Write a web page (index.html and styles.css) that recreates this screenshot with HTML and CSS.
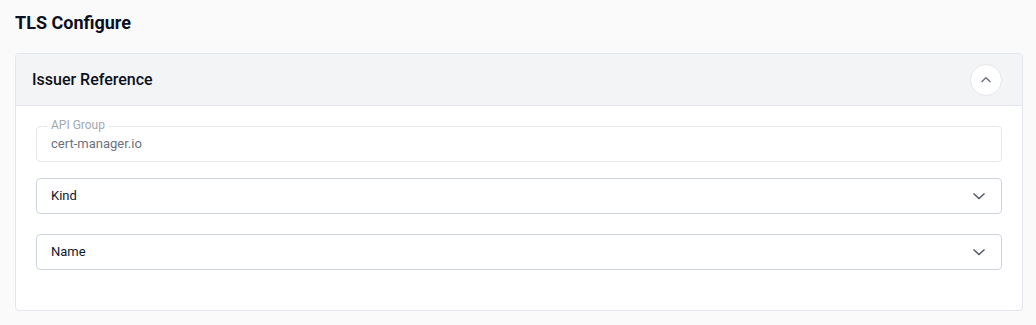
FILE: index.html
```html
<!DOCTYPE html>
<html lang="en">
<head>
    <meta charset="UTF-8">
    <meta name="viewport" content="width=device-width, initial-scale=1.0">
    <title>TLS Configure</title>
    <link rel="stylesheet" href="styles.css">
</head>
<body>
    <div class="page">
        <h1 class="page-title">TLS Configure</h1>

        <section class="card">
            <div class="card-header">
                <h2>Issuer Reference</h2>
                <button type="button" class="collapse-btn">
                    <svg width="12" height="12" viewBox="0 0 12 12"><path d="M1.5 8 L6 3.8 L10.5 8" fill="none" stroke="#6b7280" stroke-width="1.4"/></svg>
                </button>
            </div>

            <div class="card-body">
                <!-- disabled field -->
                <fieldset class="field field-disabled">
                    <legend>API Group</legend>
                    <span class="value">cert-manager.io</span>
                </fieldset>

                <div class="field select">
                    <span class="value">Kind</span>
                    <svg width="14" height="14" viewBox="0 0 14 14"><path d="M1.5 4.5 L7 9.5 L12.5 4.5" fill="none" stroke="#4b5563" stroke-width="1.4"/></svg>
                </div>

                <div class="field select">
                    <span class="value">Name</span>
                    <svg width="14" height="14" viewBox="0 0 14 14"><path d="M1.5 4.5 L7 9.5 L12.5 4.5" fill="none" stroke="#4b5563" stroke-width="1.4"/></svg>
                </div>
            </div>
        </section>
    </div>
</body>
</html>
```

FILE: styles.css
```css
body {
    margin: 0;
    font-family: Roboto, "Liberation Sans", Arial, sans-serif;
    background: #fafafb;
    color: #111827;
}
.page {
    padding: 11px 13px 0 15px;
}
.page-title {
    margin: 0;
    font-size: 18px;
    line-height: 24px;
    font-weight: 700;
    color: #0b1020;
}
.card {
    margin-top: 18px;
    border: 1px solid #e3e6ec;
    border-radius: 4px;
    background: #fff;
}
.card-header {
    display: flex;
    align-items: center;
    justify-content: space-between;
    height: 51px;
    padding: 0 20px 0 16px;
    background: #f3f4f6;
    border-bottom: 1px solid #e3e6ec;
    border-radius: 4px 4px 0 0;
}
.card-header h2 {
    margin: 0;
    font-size: 16px;
    font-weight: 500;
    color: #0b1020;
}
.collapse-btn {
    display: flex;
    align-items: center;
    justify-content: center;
    width: 32px;
    height: 32px;
    padding: 0;
    border: 1px solid #e5e7eb;
    border-radius: 50%;
    background: #fff;
    cursor: pointer;
}
.card-body {
    display: flex;
    flex-direction: column;
    padding: 20px 20px 40px 20px;
}
.field {
    box-sizing: border-box;
    height: 36px;
    margin: 0;
    padding: 0 14px;
    border: 1px solid #cdd3de;
    border-radius: 4px;
    font-size: 13px;
    line-height: 15px;
    display: flex;
    align-items: center;
}
.field + .field {
    margin-top: 16px;
}
.field + .field + .field {
    margin-top: 20px;
}
.field-disabled {
    display: block;
    position: relative;
    border-color: #e5e7eb;
    padding-top: 0;
}
.field-disabled legend {
    position: absolute;
    top: -9px;
    left: 10px;
    padding: 0 4px;
    background: #fff;
    font-size: 12px;
    line-height: 15px;
    color: #a3a8b1;
}
.field-disabled .value {
    display: block;
    line-height: 34px;
    color: #6b7280;
}
.select {
    justify-content: space-between;
    background: #fff;
}
.select .value {
    color: #111827;
    margin-top: -2px;
}
.select svg {
    margin-right: 1px;
}
```
